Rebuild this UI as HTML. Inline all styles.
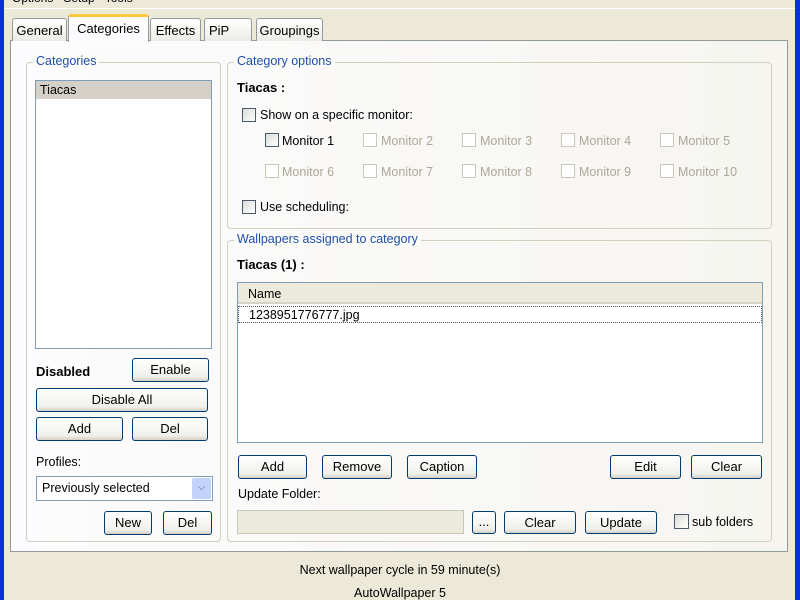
<!DOCTYPE html>
<html><head><meta charset="utf-8"><style>
*{box-sizing:border-box;margin:0;padding:0}
body{width:800px;height:600px;overflow:hidden;background:#ece9d8;font-family:"Liberation Sans",sans-serif;font-size:12.5px;color:#000;position:relative}
.a{position:absolute}
.blue{background:#0831d9}
.tab{position:absolute;border:1px solid #919b9c;border-bottom:none;background:linear-gradient(#fff,#ecebe5);border-radius:3px 3px 0 0;text-align:center;font-size:13px}
.page{position:absolute;left:10px;top:40px;width:778px;height:512px;border:1px solid #919b9c;background:linear-gradient(90deg,#fcfcfe,#f6f5f0)}
.grp{position:absolute;border:1px solid #d0d0bf;border-radius:4px}
.gl{position:absolute;top:-9px;left:6px;padding:0 3px;color:#1f4fa8;font-size:12.5px;background:#fbfbf9}
.btn{position:absolute;border:1px solid #003c74;border-radius:3px;background:linear-gradient(#fff,#f0f0ea 80%,#d6d0c5);text-align:center;font-size:13px;line-height:22px}
.cb{position:absolute;width:14px;height:14px;border:1px solid #4a5a6a;background:linear-gradient(135deg,#dcdcd7,#fff)}
.cbd{position:absolute;width:14px;height:14px;border:1px solid #cac8bb;background:#fff}
.dis{position:absolute;color:#aca899}
</style></head><body>
<div class="a blue" style="left:0;top:0;width:4px;height:600px"></div>
<div class="a blue" style="left:795px;top:0;width:5px;height:600px"></div>
<div class="a" style="left:4px;top:8px;width:791px;height:1px;background:#fff"></div>
<div class="a" style="left:12px;top:-9px;font-size:12px">Options &nbsp;&nbsp;Setup &nbsp;&nbsp;Tools</div>

<div class="page"></div>
<div class="tab" style="left:12px;top:18px;width:55px;height:23px;line-height:23px">General</div>
<div class="tab" style="left:150px;top:18px;width:51px;height:23px;line-height:23px">Effects</div>
<div class="tab" style="left:204px;top:18px;width:48px;height:23px;line-height:23px;text-align:left;padding-left:4px">PiP</div>
<div class="tab" style="left:256px;top:18px;width:67px;height:23px;line-height:23px">Groupings</div>
<div class="tab" style="left:68px;top:14px;width:81px;height:28px;line-height:24px;background:#fcfcfe;border-top:3px solid #ffc83c">Categories</div>

<div class="grp" style="left:26px;top:62px;width:195px;height:480px"><span class="gl">Categories</span></div>
<div class="a" style="left:35px;top:80px;width:177px;height:269px;border:1px solid #7f9db9;background:#fff"></div>
<div class="a" style="left:36px;top:81px;width:175px;height:18px;background:#d4d0c8;padding-left:4px;line-height:18px">Tiacas</div>
<div class="a" style="left:36px;top:364px;font-weight:bold;font-size:13px">Disabled</div>
<div class="btn" style="left:132px;top:358px;width:77px;height:24px">Enable</div>
<div class="btn" style="left:36px;top:388px;width:172px;height:24px">Disable All</div>
<div class="btn" style="left:36px;top:417px;width:87px;height:24px">Add</div>
<div class="btn" style="left:132px;top:417px;width:76px;height:24px">Del</div>
<div class="a" style="left:36px;top:455px">Profiles:</div>
<div class="a" style="left:36px;top:476px;width:177px;height:25px;border:1px solid #7f9db9;background:#fff;line-height:23px;padding-left:5px">Previously selected</div>
<div class="a" style="left:192px;top:478px;width:19px;height:21px;background:#c1d3fb;border-radius:2px;color:#4d6185;text-align:center;line-height:20px;font-size:10px">&#9013;</div>
<div class="btn" style="left:104px;top:511px;width:48px;height:24px">New</div>
<div class="btn" style="left:163px;top:511px;width:49px;height:24px">Del</div>

<div class="grp" style="left:227px;top:62px;width:545px;height:167px"><span class="gl">Category options</span></div>
<div class="a" style="left:237px;top:80px;font-weight:bold;font-size:13px">Tiacas :</div>
<div class="cb" style="left:242px;top:108px"></div><div class="a" style="left:260px;top:108px">Show on a specific monitor:</div>
<div class="cb" style="left:265px;top:133px"></div><div class="a" style="left:282px;top:134px">Monitor 1</div>
<div class="cbd" style="left:363px;top:133px"></div><div class="dis" style="left:381px;top:134px">Monitor 2</div>
<div class="cbd" style="left:462px;top:133px"></div><div class="dis" style="left:480px;top:134px">Monitor 3</div>
<div class="cbd" style="left:561px;top:133px"></div><div class="dis" style="left:579px;top:134px">Monitor 4</div>
<div class="cbd" style="left:660px;top:133px"></div><div class="dis" style="left:678px;top:134px">Monitor 5</div>
<div class="cbd" style="left:265px;top:164px"></div><div class="dis" style="left:282px;top:165px">Monitor 6</div>
<div class="cbd" style="left:363px;top:164px"></div><div class="dis" style="left:381px;top:165px">Monitor 7</div>
<div class="cbd" style="left:462px;top:164px"></div><div class="dis" style="left:480px;top:165px">Monitor 8</div>
<div class="cbd" style="left:561px;top:164px"></div><div class="dis" style="left:579px;top:165px">Monitor 9</div>
<div class="cbd" style="left:660px;top:164px"></div><div class="dis" style="left:678px;top:165px">Monitor 10</div>
<div class="cb" style="left:242px;top:200px"></div><div class="a" style="left:260px;top:200px">Use scheduling:</div>

<div class="grp" style="left:227px;top:240px;width:545px;height:302px"><span class="gl">Wallpapers assigned to category</span></div>
<div class="a" style="left:237px;top:257px;font-weight:bold;font-size:13px">Tiacas (1) :</div>
<div class="a" style="left:237px;top:282px;width:526px;height:161px;border:1px solid #7f9db9;background:#fff"></div>
<div class="a" style="left:238px;top:283px;width:524px;height:21px;background:#ebeadb;border-bottom:2px solid #d6d3c6;padding-left:10px;line-height:22px">Name</div>
<div class="a" style="left:238px;top:306px;width:524px;height:17px;border:1px dotted #555;padding-left:10px;line-height:16px">1238951776777.jpg</div>
<div class="btn" style="left:238px;top:455px;width:69px;height:24px">Add</div>
<div class="btn" style="left:322px;top:455px;width:70px;height:24px">Remove</div>
<div class="btn" style="left:407px;top:455px;width:70px;height:24px">Caption</div>
<div class="btn" style="left:610px;top:455px;width:71px;height:24px">Edit</div>
<div class="btn" style="left:691px;top:455px;width:71px;height:24px">Clear</div>
<div class="a" style="left:238px;top:487px">Update Folder:</div>
<div class="a" style="left:237px;top:510px;width:227px;height:24px;border:1px solid #c9c7ba;background:#ebeadb"></div>
<div class="btn" style="left:472px;top:511px;width:24px;height:23px;line-height:20px">...</div>
<div class="btn" style="left:504px;top:511px;width:72px;height:23px">Clear</div>
<div class="btn" style="left:585px;top:511px;width:72px;height:23px">Update</div>
<div class="cb" style="left:674px;top:514px;width:15px;height:15px"></div><div class="a" style="left:692px;top:515px">sub folders</div>

<div class="a" style="left:0;top:563px;width:800px;text-align:center">Next wallpaper cycle in 59 minute(s)</div>
<div class="a" style="left:0;top:586px;width:800px;text-align:center">AutoWallpaper 5</div>
</body></html>
